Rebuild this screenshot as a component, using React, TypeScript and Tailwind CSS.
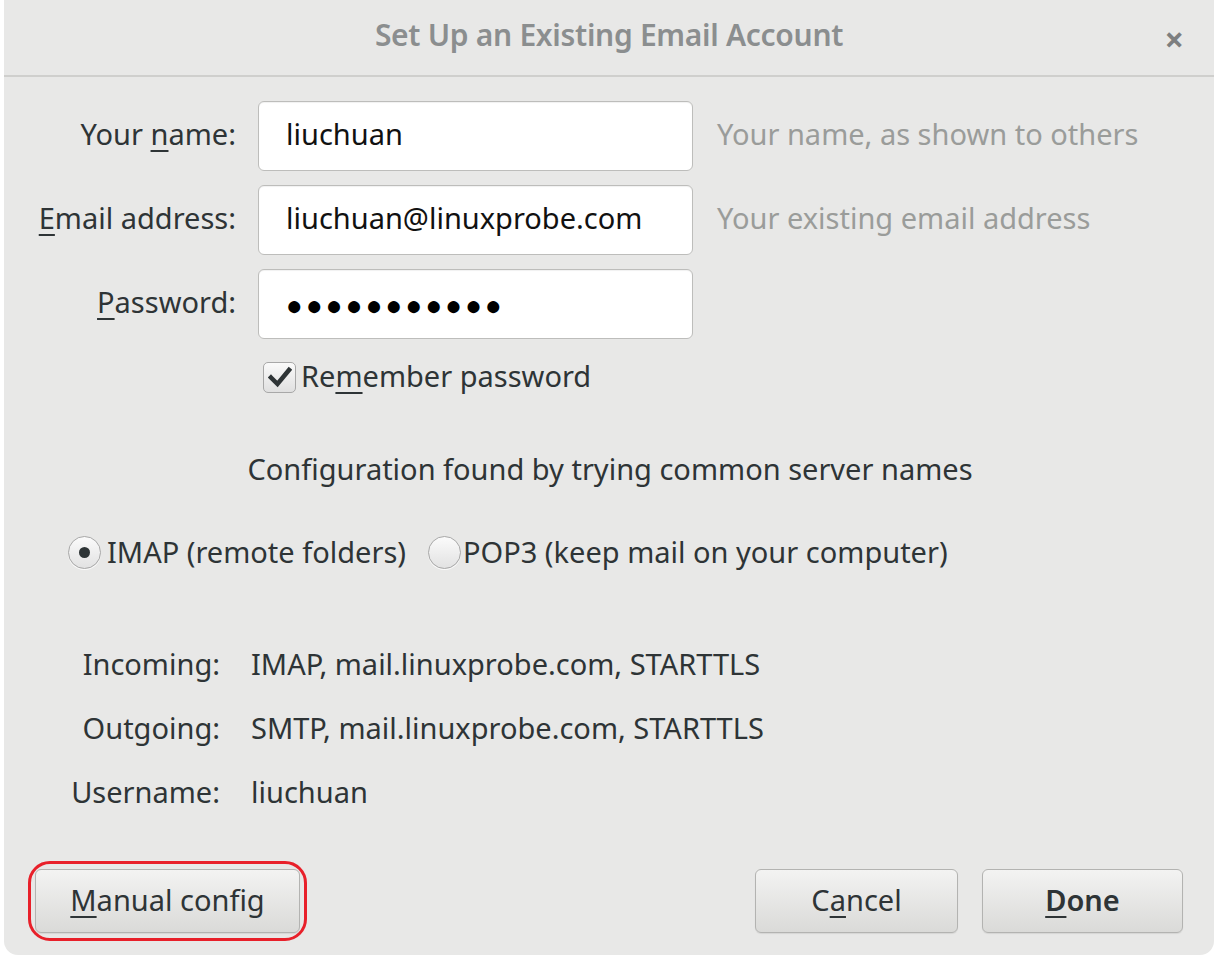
const FONT = "font-['Noto_Sans','Open_Sans',sans-serif]";

function Mn({ children }: { children: string }) {
  return <span className="underline decoration-[2px] underline-offset-[5px]">{children}</span>;
}

function Field({ label, value, hint, mono }: { label: React.ReactNode; value: string; hint?: string; mono?: boolean }) {
  return (
    <div className="flex h-[70px] items-center">
      <div className="mt-[-4px] w-[232px] text-right text-[29px] text-[#2e3436]">{label}</div>
      <div className="ml-[22px] flex h-[70px] w-[435px] items-center rounded-[6px] border border-[#bdbdbb] bg-white px-[27px] shadow-[inset_0_1px_1px_rgba(0,0,0,0.06)]">
        {mono ? (
          <span className="text-[28px] tracking-[3px] text-black">{value}</span>
        ) : (
          <span className="mt-[-4px] text-[29px] text-[#111]">{value}</span>
        )}
      </div>
      {hint && <div className="ml-[24px] mt-[-4px] text-[29px] text-[#9a9c9a]">{hint}</div>}
    </div>
  );
}

function Radio({ checked }: { checked?: boolean }) {
  return (
    <span className="flex h-[33px] w-[33px] items-center justify-center rounded-full border border-[#a8a8a8] bg-gradient-to-b from-[#fbfbfb] to-[#e2e2e2] shadow-[0_1px_0_rgba(255,255,255,0.8)]">
      {checked && <span className="h-[11px] w-[11px] rounded-full bg-[#2e3436]" />}
    </span>
  );
}

function Button({ children, bold, className = "" }: { children: React.ReactNode; bold?: boolean; className?: string }) {
  return (
    <div
      className={`flex h-[64px] items-center justify-center rounded-[6px] border border-[#b3b3b1] bg-gradient-to-b from-[#f3f3f2] to-[#dadad8] text-[29px] text-[#2e3436] shadow-[0_1px_1px_rgba(0,0,0,0.08)] ${bold ? "font-semibold" : ""} ${className}`}
    >
      {children}
    </div>
  );
}

export default function App() {
  return (
    <div className={`h-[965px] w-[1219px] bg-white ${FONT}`}>
      <div className="ml-[4px] flex h-[955px] w-[1210px] flex-col rounded-b-[14px] bg-[#e8e8e7]">
        {/* header */}
        <div className="relative flex h-[77px] items-center justify-center border-b-2 border-[#cfcfcd]">
          <span className="mt-[-6px] text-[30px] font-semibold tracking-[-0.3px] text-[#8b8e8f]">
            Set Up an Existing Email Account
          </span>
          <span className="absolute right-[30px] top-[14px] text-[34px] font-bold text-[#7d7f80]">×</span>
        </div>

        {/* form */}
        <div className="mt-[24px] flex flex-col gap-[14px]">
          <Field label={<>Your <Mn>n</Mn>ame:</>} value="liuchuan" hint="Your name, as shown to others" />
          <Field label={<><Mn>E</Mn>mail address:</>} value="liuchuan@linuxprobe.com" hint="Your existing email address" />
          <Field label={<><Mn>P</Mn>assword:</>} value="●●●●●●●●●●●" mono />
        </div>

        <div className="ml-[259px] mt-[23px] flex h-[30px] items-center">
          <span className="flex h-[31px] w-[33px] items-center justify-center rounded-[5px] border border-[#a8a8a8] bg-gradient-to-b from-[#fafafa] to-[#e0e0e0]">
            <svg width="24" height="22" viewBox="0 0 24 22">
              <path d="M3 11.5 L9.5 18 L21 4" fill="none" stroke="#2e3436" strokeWidth="4.5" strokeLinecap="square" />
            </svg>
          </span>
          <span className="ml-[5px] mt-[-2px] text-[29px] text-[#2e3436]">
            Re<Mn>m</Mn>ember password
          </span>
        </div>

        <div className="mt-[55px] pl-[2px] text-center text-[29px] text-[#2e3436]">
          Configuration found by trying common server names
        </div>

        <div className="ml-[64px] mt-[42px] flex items-center text-[29px] text-[#2e3436]">
          <Radio checked />
          <span className="ml-[6px] mt-[-3px]">IMAP (remote folders)</span>
          <span className="ml-[22px]">
            <Radio />
          </span>
          <span className="ml-[2px] mt-[-3px]">POP3 (keep mail on your computer)</span>
        </div>

        <div className="mt-[70px] flex flex-col gap-[22px] text-[29px] text-[#2e3436]">
          {[
            ["Incoming:", "IMAP, mail.linuxprobe.com, STARTTLS"],
            ["Outgoing:", "SMTP, mail.linuxprobe.com, STARTTLS"],
            ["Username:", "liuchuan"],
          ].map(([k, v]) => (
            <div key={k} className="flex h-[42px] items-center">
              <span className="w-[216px] text-right">{k}</span>
              <span className="ml-[31px]">{v}</span>
            </div>
          ))}
        </div>

        <div className="mt-auto mb-[22px] flex items-center px-[31px]">
          <div className="relative">
            <Button className="w-[265px]">
              <span className="mt-[-3px]"><Mn>M</Mn>anual config</span>
            </Button>
            <div className="pointer-events-none absolute -inset-x-[7px] -inset-y-[8px] rounded-[22px] border-[3px] border-[#e8202a]" />
          </div>
          <div className="ml-auto flex gap-[24px]">
            <Button className="w-[203px]">
              <span className="mt-[-3px]">C<Mn>a</Mn>ncel</span>
            </Button>
            <Button bold className="w-[201px]">
              <span className="mt-[-3px]"><Mn>D</Mn>one</span>
            </Button>
          </div>
        </div>
      </div>
    </div>
  );
}
